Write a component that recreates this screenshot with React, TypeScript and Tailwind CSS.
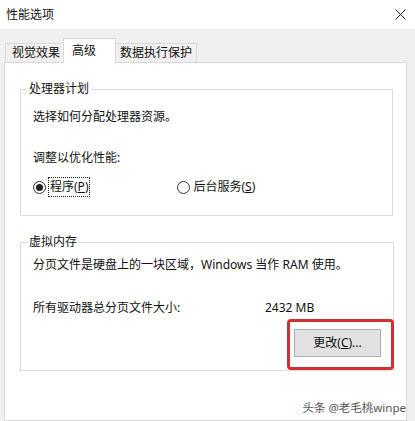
import React from 'react';

const Radio = ({ checked }: { checked?: boolean }) => (
  <span className="w-[13px] h-[13px] rounded-full border border-[#333] bg-white flex items-center justify-center shrink-0">
    {checked && <span className="w-[7px] h-[7px] rounded-full bg-[#222]"></span>}
  </span>
);

const App = () => {
  return (
    <div className="w-[415px] h-[421px] overflow-hidden bg-[#f0f0f0] text-[12px] leading-[16px] text-[#111] flex flex-col relative font-['Segoe_UI','Noto_Sans','Noto_Sans_CJK_SC',sans-serif]">
      {/* Title bar */}
      <div className="h-[29px] bg-white flex items-center justify-between pl-[6px] pr-[9px] shrink-0">
        <span>性能选项</span>
        <svg width="11" height="11" viewBox="0 0 11 11" className="text-[#222]">
          <path d="M0.5 0.5 L10.5 10.5 M10.5 0.5 L0.5 10.5" stroke="currentColor" strokeWidth="1" />
        </svg>
      </div>

      {/* Tabs */}
      <div className="h-[33px] flex items-end pl-[5px] shrink-0">
        <div className="w-[58px] h-[19px] border-l border-t border-[#d9d9d9] pl-[6px] flex items-center">视觉效果</div>
        <div className="w-[53px] h-[25px] -mb-px relative z-10 bg-white border-l border-t border-r border-[#d9d9d9] pl-[8px] flex items-center">高级</div>
        <div className="w-[81px] h-[19px] border-t border-r border-[#d9d9d9] pl-[4px] flex items-center">数据执行保护</div>
      </div>

      {/* Panel */}
      <div className="flex-1 ml-[4px] mr-[8px] bg-white border border-[#d9d9d9] pt-[18px]">
        <fieldset className="ml-[15px] mr-[13px] border border-[#dcdcdc] px-0 pb-[18px]">
          <legend className="ml-[6px] px-[2px]">处理器计划</legend>
          <div className="pl-[12px] pt-[12px]">
            <div>选择如何分配处理器资源。</div>
            <div className="mt-[25px]">调整以优化性能:</div>
            <div className="mt-[11px] h-[20px] flex items-center">
              <Radio checked />
              <span className="ml-[2px] h-[20px] px-[1px] flex items-center border border-dotted border-[#222]">
                程序(<u>P</u>)
              </span>
              <span className="ml-[87px] flex items-center">
                <Radio />
                <span className="ml-[3px]">后台服务(<u>S</u>)</span>
              </span>
            </div>
          </div>
        </fieldset>

        <fieldset className="mt-[18px] ml-[15px] mr-[12px] border border-[#dcdcdc] px-0 pb-[13px]">
          <legend className="ml-[6px] px-[2px]">虚拟内存</legend>
          <div className="pl-[12px] pt-[7px]">
            <div>分页文件是硬盘上的一块区域，Windows 当作 RAM 使用。</div>
            <div className="mt-[27px] flex">
              <span className="w-[232px]">所有驱动器总分页文件大小:</span>
              <span>2432 MB</span>
            </div>
            <div className="mt-[13px] flex justify-end pr-[12px]">
              <div className="relative">
                <button className="w-[87px] h-[28px] bg-[#e1e1e1] border border-[#adadad] flex items-center justify-center">
                  更改(<u>C</u>)...
                </button>
                <div className="absolute -left-[7px] -right-[13px] -top-[10px] -bottom-[13px] border-[3px] border-[#d0302f] rounded-[4px] pointer-events-none"></div>
              </div>
            </div>
          </div>
        </fieldset>
      </div>

      {/* Watermark */}
      <div className="absolute right-[9px] bottom-[5px] text-[11.5px] text-[#555]">头条 @老毛桃winpe</div>
    </div>
  );
};

export default App;
